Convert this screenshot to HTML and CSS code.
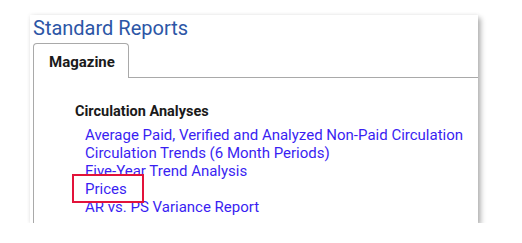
FILE: index.html
```html
<!DOCTYPE html>
<html lang="en">
<head>
    <meta charset="UTF-8" />
    <title>Standard Reports</title>
    <link rel="stylesheet" href="styles.css">
</head>
<body>
    <div class="panel">
        <h1 class="titulo">Standard Reports</h1>
        <div class="tabs">
            <div class="tab activo">Magazine</div>
            <div class="tab-linea"></div>
        </div>
        <section class="contenido">
            <h2 class="grupo">Circulation Analyses</h2>
            <ul class="reportes">
                <li><a href="#">Average Paid, Verified and Analyzed Non-Paid Circulation</a></li>
                <li><a href="#">Circulation Trends (6 Month Periods)</a></li>
                <li><a href="#">Five-Year Trend Analysis</a></li>
                <li class="marcado"><a href="#">Prices</a></li>
                <li><a href="#">AR vs. PS Variance Report</a></li>
            </ul>
        </section>
    </div>
</body>
</html>
```

FILE: styles.css
```css
/* Variables */
:root {
    --color-titulo: #2c56a6;
    --color-link: #3a1ff2;
    --color-borde: #a9a9a9;
    --color-marca: #e2133a;
    --font-family: Roboto, 'Liberation Sans', sans-serif;
}

* {
    box-sizing: border-box;
    margin: 0;
    padding: 0;
}

body {
    font-family: var(--font-family);
    background: #ffffff;
    color: #1a1a1a;
    -webkit-font-smoothing: antialiased;
}

.panel {
    margin: 15px 0 0 30px;
    width: 448px;
    height: 208px;
    background: #ffffff;
    box-shadow: 3px 3px 5px rgba(0, 0, 0, 0.28), 0 0 4px rgba(0, 0, 0, 0.08);
    padding-left: 3px;
    display: flex;
    flex-direction: column;
}

.titulo {
    font-size: 20px;
    font-weight: 400;
    color: var(--color-titulo);
    line-height: 26px;
    height: 28px;
}

.tabs {
    display: flex;
    align-items: flex-end;
    height: 35px;
}

.tab {
    width: 96px;
    height: 35px;
    border: 1px solid var(--color-borde);
    border-bottom: none;
    border-radius: 4px 4px 0 0;
    font-size: 15px;
    font-weight: 700;
    padding: 9px 0 0 15px;
}

.tab-linea {
    flex: 1;
    border-bottom: 1px solid var(--color-borde);
}

.contenido {
    flex: 1;
    border-left: 1px solid var(--color-borde);
    padding: 25px 0 0 41px;
}

.grupo {
    font-size: 14.5px;
    font-weight: 700;
    line-height: 18px;
    margin-bottom: 5px;
}

.reportes {
    list-style: none;
    padding-left: 10px;
}

.reportes li {
    font-size: 15px;
    line-height: 18px;
}

.reportes a {
    color: var(--color-link);
    text-decoration: none;
}

/* Recuadro de resaltado sobre el enlace */
.reportes .marcado {
    position: relative;
}

.reportes .marcado::after {
    content: "";
    position: absolute;
    left: -13px;
    top: -6px;
    width: 68px;
    height: 25px;
    border: 2px solid var(--color-marca);
    pointer-events: none;
}
```
